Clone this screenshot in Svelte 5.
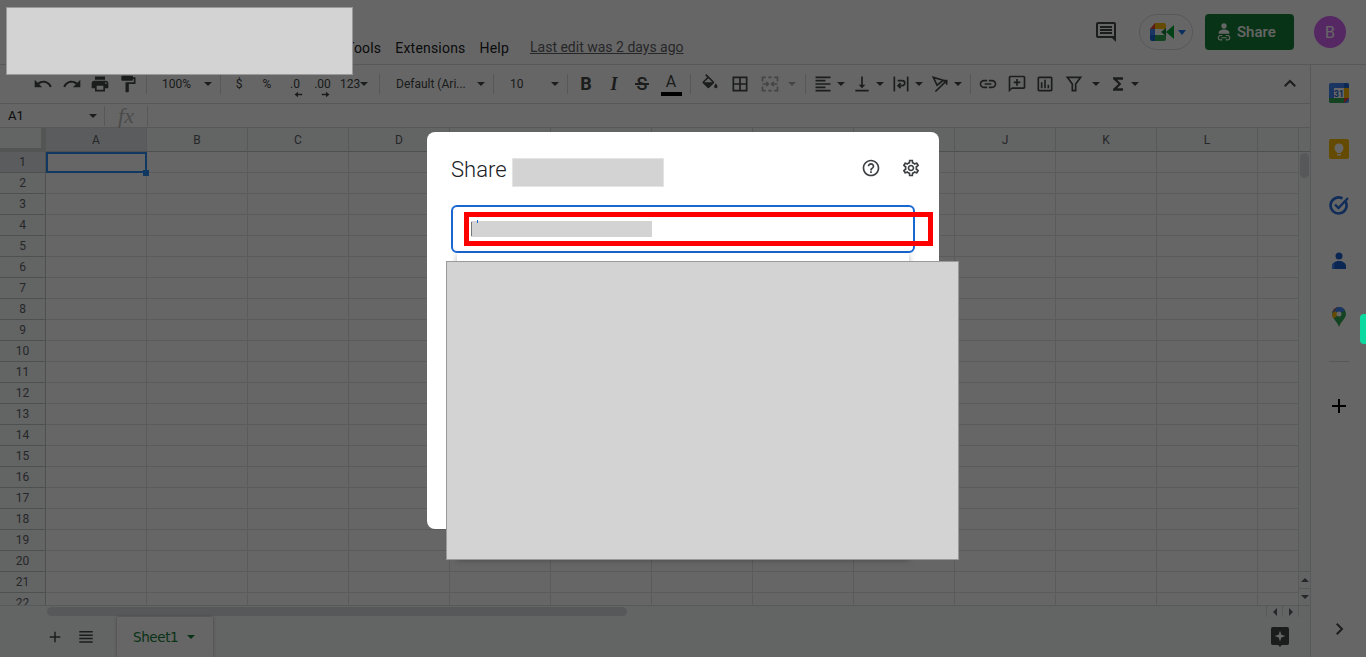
<script>
  const menus = ['File', 'Edit', 'View', 'Insert', 'Format', 'Data', 'Tools', 'Extensions', 'Help']
  const cols = ['', 'A', 'B', 'C', 'D', 'E', 'F', 'G', 'H', 'I', 'J', 'K', 'L', '']
  const rows = Array.from({ length: 22 }, (_, i) => i + 1)

  const tools = [
    { k: 'gap', w: 29 },
    { k: 'icon', w: 28, d: 'M12.5 8c-2.65 0-5.05.99-6.9 2.6L2 7v9h9l-3.62-3.62c1.39-1.16 3.16-1.88 5.12-1.88 3.54 0 6.55 2.31 7.6 5.5l2.37-.78C21.08 11.03 17.15 8 12.5 8z' },
    { k: 'icon', w: 29, d: 'M18.4 10.6C16.55 8.99 14.15 8 11.5 8c-4.65 0-8.58 3.03-9.96 7.22L3.9 16c1.05-3.19 4.05-5.5 7.6-5.5 1.95 0 3.73.72 5.12 1.88L13 16h9V7l-3.6 3.6z' },
    { k: 'icon', w: 28, d: 'M19 8H5c-1.66 0-3 1.34-3 3v6h4v4h12v-4h4v-6c0-1.66-1.34-3-3-3zm-3 11H8v-5h8v5zm3-7c-.55 0-1-.45-1-1s.45-1 1-1 1 .45 1 1-.45 1-1 1zm-1-9H6v4h12V3z' },
    { k: 'icon', w: 28, d: 'M18 4V3c0-.55-.45-1-1-1H5c-.55 0-1 .45-1 1v4c0 .55.45 1 1 1h12c.55 0 1-.45 1-1V6h1v4H9v11c0 .55.45 1 1 1h2c.55 0 1-.45 1-1v-9h8V4h-3z' },
    { k: 'gap', w: 4 },
    { k: 'sep' },
    { k: 'select', w: 73, pl: 15, label: '100%' },
    { k: 'sep' },
    { k: 'gap', w: 4 },
    { k: 'text', w: 28, label: '$' },
    { k: 'text', w: 28, label: '%' },
    { k: 'dec', w: 28, label: '.0', arrow: 'M8 1L3 5l5 4V6h6V4H8z' },
    { k: 'dec', w: 27, label: '.00', arrow: 'M8 1l5 4-5 4V6H2V4h6z' },
    { k: 'select', w: 34, pl: 4, label: '123' },
    { k: 'gap', w: 9 },
    { k: 'sep' },
    { k: 'select', w: 113, pl: 16, label: 'Default (Ari...' },
    { k: 'sep' },
    { k: 'select', w: 73, pl: 16, label: '10' },
    { k: 'sep' },
    { k: 'gap', w: 4 },
    { k: 'fmt', w: 28, label: 'B', cls: 'b' },
    { k: 'fmt', w: 28, label: 'I', cls: 'i' },
    { k: 'fmt', w: 28, label: 'S', cls: 's' },
    { k: 'fmt', w: 30, label: 'A', cls: 'a' },
    { k: 'gap', w: 4 },
    { k: 'sep' },
    { k: 'gap', w: 4 },
    { k: 'icon', w: 30, d: 'M16.56 8.94L7.62 0 6.21 1.41l2.38 2.38-5.15 5.15c-.59.59-.59 1.54 0 2.12l5.5 5.5c.29.29.68.44 1.06.44s.77-.15 1.06-.44l5.5-5.5c.59-.58.59-1.53 0-2.12zM5.21 10L10 5.21 14.79 10H5.21zM19 11.5s-2 2.17-2 3.5c0 1.1.9 2 2 2s2-.9 2-2c0-1.33-2-3.5-2-3.5z' },
    { k: 'icon', w: 30, d: 'M3 3v18h18V3H3zm8 16H5v-6h6v6zm0-8H5V5h6v6zm8 8h-6v-6h6v6zm0-8h-6V5h6v6z' },
    { k: 'icon', w: 30, dim: true, s: 'M3 9V4h4M10 4h4M17 4h4v5M3 15v5h4M10 20h4M17 20h4v-5M3 12h7M7.500 9.500L10 12l-2.500 2.500M21 12h-7M16.500 9.500L14 12l2.500 2.500' },
    { k: 'caret', w: 14, dim: true },
    { k: 'gap', w: 6 },
    { k: 'sep' },
    { k: 'gap', w: 4 },
    { k: 'icon', w: 26, d: 'M15 15H3v2h12v-2zm0-8H3v2h12V7zM3 13h18v-2H3v2zm0 8h18v-2H3v2zM3 3v2h18V3H3z' },
    { k: 'caret', w: 9 },
    { k: 'gap', w: 4 },
    { k: 'icon', w: 26, d: 'M16 13h-3V3h-2v10H8l4 4 4-4zM4 19v2h16v-2H4z' },
    { k: 'caret', w: 9 },
    { k: 'gap', w: 4 },
    { k: 'icon', w: 26, d: 'M3 3h2v18H3zM19 3h2v18h-2z', s: 'M8 8h5.500a3 3 0 0 1 0 6H9M11.500 11L8.500 14l3 3' },
    { k: 'caret', w: 9 },
    { k: 'gap', w: 4 },
    { k: 'icon', w: 26, s: 'M4 4l12 3.500-7.500 6zM6.500 21L20 8M15 8h5v5' },
    { k: 'caret', w: 9 },
    { k: 'gap', w: 8 },
    { k: 'sep' },
    { k: 'gap', w: 3 },
    { k: 'icon', w: 28, d: 'M3.900 12c0-1.710 1.390-3.100 3.100-3.100h4V7H7c-2.760 0-5 2.240-5 5s2.240 5 5 5h4v-1.900H7c-1.710 0-3.100-1.390-3.100-3.100zM8 13h8v-2H8v2zm9-6h-4v1.900h4c1.710 0 3.100 1.390 3.100 3.100s-1.390 3.100-3.100 3.100h-4V17h4c2.760 0 5-2.240 5-5s-2.240-5-5-5z' },
    { k: 'icon', w: 29, d: 'M20 2H4c-1.100 0-2 .9-2 2v18l4-4h14c1.100 0 2-.9 2-2V4c0-1.100-.9-2-2-2zm0 14H6l-2 2V4h16v12zM11 6h2v3h3v2h-3v3h-2v-3H8V9h3z' },
    { k: 'icon', w: 28, d: 'M19 3H5c-1.100 0-2 .9-2 2v14c0 1.100.9 2 2 2h14c1.100 0 2-.9 2-2V5c0-1.100-.9-2-2-2zm0 16H5V5h14v14zM7 10h2v7H7zm4-3h2v10h-2zm4 6h2v4h-2z' },
    { k: 'icon', w: 30, s: 'M4 4h16l-6 8v8h-4v-8z' },
    { k: 'caret', w: 13 },
    { k: 'gap', w: 2 },
    { k: 'icon', w: 27, d: 'M18 4H6v2l6.500 6L6 18v2h12v-3h-7l5-5-5-5h7z' },
    { k: 'caret', w: 8 }
  ]
</script>

<div class="app">
  <header class="top">
    <nav class="menu">
      {#each menus as m}
        <span>{m}</span>
      {/each}
    </nav>
    <span class="last-edit">Last edit was 2 days ago</span>
    <div class="top-right">
      <svg class="ic24 comment" viewBox="0 0 24 24"><path d="M21.990 4c0-1.100-.89-2-1.990-2H4c-1.100 0-2 .9-2 2v12c0 1.100.9 2 2 2h14l4 4-.01-18zM20 16H4V4h16v12zM6 12h12v2H6zm0-3h12v2H6zm0-3h12v2H6z" /></svg>
      <div class="meet">
        <svg width="24" height="18" viewBox="0 0 24 18">
          <path d="M5 0h9a2 2 0 0 1 2 2v4H5z" fill="#fbbc04" />
          <path d="M5 0v6H0z" fill="#ea4335" />
          <path d="M0 6h5v6H0z" fill="#4285f4" />
          <path d="M0 12h5v6H2a2 2 0 0 1-2-2z" fill="#1967d2" />
          <path d="M5 12h11v4a2 2 0 0 1-2 2H5z" fill="#34a853" />
          <path d="M11 9l5-4v8z" fill="#188038" />
          <path d="M16 9l8-7v14z" fill="#00a63e" />
        </svg>
        <i class="meet-caret"></i>
      </div>
      <button class="share">
        <svg width="14" height="20" viewBox="0 0 16 22">
          <circle cx="8" cy="4" r="3" fill="#fff" />
          <path d="M2 13v-2c0-1.500 3-3 6-3s6 1.500 6 3v2z" fill="#fff" />
          <path d="M6 15H4a2.500 2.500 0 0 0 0 5h2M10 15h2a2.500 2.500 0 0 1 0 5h-2M5 17.500h6" fill="none" stroke="#fff" stroke-width="1.200" />
        </svg>
        Share
      </button>
      <div class="avatar">B</div>
    </div>
  </header>

  <div class="body">
    <main class="main">
      <div class="toolbar">
        {#each tools as t}
          {#if t.k === 'gap'}
            <span style:width="{t.w}px"></span>
          {:else if t.k === 'sep'}
            <span class="sep"></span>
          {:else if t.k === 'icon'}
            <span class="tool" class:dim={t.dim} style:width="{t.w}px">
              <svg class="ic20" viewBox="0 0 24 24">
                {#if t.d}<path d={t.d} />{/if}
                {#if t.s}<path class="stroke" d={t.s} />{/if}
              </svg>
            </span>
          {:else if t.k === 'caret'}
            <span class="tool" class:dim={t.dim} style:width="{t.w}px"><i class="caret"></i></span>
          {:else if t.k === 'select'}
            <span class="tool select" style:width="{t.w}px" style:padding-left="{t.pl}px">
              <span>{t.label}</span><i class="caret"></i>
            </span>
          {:else if t.k === 'text'}
            <span class="tool label" style:width="{t.w}px">{t.label}</span>
          {:else if t.k === 'dec'}
            <span class="tool dec" style:width="{t.w}px">
              <span>{t.label}</span>
              <svg class="dec-arrow" viewBox="0 0 16 10"><path d={t.arrow} /></svg>
            </span>
          {:else if t.k === 'fmt'}
            <span class="tool fmt {t.cls}" style:width="{t.w}px">{t.label}</span>
          {/if}
        {/each}
        <span class="collapse">
          <svg class="ic18" viewBox="0 0 24 24"><path class="stroke thick" d="M5 15l7-7 7 7" /></svg>
        </span>
      </div>

      <div class="formula">
        <span class="cell-name">A1</span>
        <i class="caret"></i>
        <span class="sep"></span>
        <span class="fx">fx</span>
        <span class="sep"></span>
      </div>

      <div class="sheet">
        <div class="grid">
          {#each cols as c, i}
            <div class="head" class:corner={i === 0} class:active={c === 'A'}>{c}</div>
          {/each}
          {#each rows as r}
            {#each cols as c, i}
              {#if i === 0}
                <div class="rownum" class:active={r === 1}>{r}</div>
              {:else}
                <div class="cell" class:selected={r === 1 && c === 'A'}>
                  {#if r === 1 && c === 'A'}<i class="handle"></i>{/if}
                </div>
              {/if}
            {/each}
          {/each}
        </div>
        <div class="vscroll">
          <div class="vcap"></div>
          <div class="vtrack"><div class="vthumb"></div></div>
          <div class="vbtn"><i class="tri up"></i></div>
          <div class="vbtn"><i class="tri"></i></div>
        </div>
      </div>

      <div class="hscroll">
        <div class="hthumb"></div>
        <div class="hbtn"><i class="tri left"></i></div>
        <div class="hbtn"><i class="tri right"></i></div>
        <div class="hend"></div>
      </div>

      <div class="tabs">
        <svg class="ic18 add" viewBox="0 0 24 24"><path d="M19 13h-6v6h-2v-6H5v-2h6V5h2v6h6v2z" /></svg>
        <svg class="ic18 all" viewBox="0 0 24 24"><path d="M3 4h18v2H3zM3 8.500h18v2H3zM3 13h18v2H3zM3 17.500h18v2H3z" /></svg>
        <div class="tab"><span>Sheet1</span><i class="caret green"></i></div>
        <div class="explore">
          <svg width="18" height="20" viewBox="0 0 20 22">
            <path d="M2 0h16a2 2 0 0 1 2 2v16a2 2 0 0 1-2 2h-6l-2 2-2-2H2a2 2 0 0 1-2-2V2a2 2 0 0 1 2-2z" fill="#444746" />
            <path d="M10 4l1.500 4.500L16 10l-4.500 1.500L10 16l-1.500-4.500L4 10l4.500-1.500z" fill="#fff" />
          </svg>
        </div>
      </div>
    </main>

    <aside class="side">
      <svg class="addon" viewBox="0 0 20 20">
        <rect width="20" height="20" rx="2" fill="#4285f4" />
        <path d="M15 0h3a2 2 0 0 1 2 2v3h-5z" fill="#1967d2" />
        <path d="M15 5h5v10h-5z" fill="#fbbc04" />
        <path d="M0 15h15v5H2a2 2 0 0 1-2-2z" fill="#34a853" />
        <path d="M15 15h5l-5 5z" fill="#ea4335" />
        <rect x="5" y="5" width="10" height="10" fill="#fff" />
        <text x="10" y="13.500" class="cal">31</text>
      </svg>
      <svg class="addon" viewBox="0 0 20 20">
        <rect width="20" height="20" rx="2" fill="#fbbc04" />
        <circle cx="10" cy="9" r="4.500" fill="#fff" />
        <rect x="8" y="12" width="4" height="2" fill="#fff" />
        <rect x="8" y="15" width="4" height="1.500" fill="#fff" />
      </svg>
      <svg class="addon" viewBox="0 0 20 20">
        <path d="M16.500 6.500a8 8 0 1 1-3-3" fill="none" stroke="#2a6fdb" stroke-width="2.600" />
        <path d="M6 9.500l3.500 3.500L19 3" fill="none" stroke="#2a6fdb" stroke-width="2.400" />
      </svg>
      <svg class="addon" viewBox="0 0 20 20">
        <circle cx="10" cy="5" r="3.500" fill="#1a5fd0" />
        <path d="M3 18v-3c0-3 3.500-5 7-5s7 2 7 5v3z" fill="#1a5fd0" />
        <path d="M3 18v-3c0-1.500 1-3 2.500-3.800V18z" fill="#4285f4" />
      </svg>
      <svg class="addon" viewBox="0 0 20 20">
        <path d="M10 0a7 7 0 0 1 7 7c0 4.500-5 7-7 13-2-6-7-8.500-7-13a7 7 0 0 1 7-7z" fill="#34a853" />
        <path d="M3.500 4.500A7 7 0 0 1 8 .3l2 3.200-3.500 4.500z" fill="#ea4335" />
        <path d="M8 .3A7 7 0 0 1 16 3.500L6.500 8 4 4.500z" fill="#4285f4" />
        <path d="M3 7c0 1.500.5 3 2 4.500L10 7 6 4z" fill="#fbbc04" />
        <circle cx="10" cy="7" r="2.500" fill="#fff" />
      </svg>
      <div class="divider"></div>
      <svg class="ic24 plus" viewBox="0 0 24 24"><path d="M19 13h-6v6h-2v-6H5v-2h6V5h2v6h6v2z" /></svg>
      <svg class="ic18 chevron" viewBox="0 0 24 24"><path class="stroke thick" d="M9 5l7 7-7 7" /></svg>
    </aside>
  </div>

  <div class="scrim">
    <div class="dialog">
      <div class="dialog-head">
        <h2>Share</h2>
        <div class="redact title-mask"></div>
        <span class="dialog-icons">
          <svg class="ic20" viewBox="0 0 24 24"><path d="M11 18h2v-2h-2v2zm1-16C6.480 2 2 6.480 2 12s4.480 10 10 10 10-4.480 10-10S17.520 2 12 2zm0 18c-4.410 0-8-3.590-8-8s3.590-8 8-8 8 3.590 8 8-3.590 8-8 8zm0-14c-2.210 0-4 1.790-4 4h2c0-1.100.9-2 2-2s2 .9 2 2c0 2-3 1.750-3 5h2c0-2.250 3-2.500 3-5 0-2.210-1.790-4-4-4z" /></svg>
          <svg class="ic20" viewBox="0 0 24 24"><path d="M19.430 12.980c.04-.32.07-.64.07-.98s-.03-.66-.07-.98l2.110-1.650c.19-.15.24-.42.12-.64l-2-3.460c-.12-.22-.39-.3-.61-.22l-2.490 1c-.52-.4-1.080-.73-1.690-.98l-.38-2.650C14.460 2.180 14.250 2 14 2h-4c-.25 0-.46.18-.49.42l-.38 2.650c-.61.25-1.170.59-1.690.98l-2.490-1c-.23-.09-.49 0-.61.22l-2 3.460c-.13.22-.07.49.12.64l2.110 1.650c-.04.32-.07.65-.07.98s.03.66.07.98l-2.110 1.650c-.19.15-.24.42-.12.64l2 3.460c.12.22.39.3.61.22l2.490-1c.52.4 1.080.73 1.690.98l.38 2.650c.03.24.24.42.49.42h4c.25 0 .46-.18.49-.42l.38-2.650c.61-.25 1.170-.59 1.690-.98l2.490 1c.23.09.49 0 .61-.22l2-3.460c.12-.22.07-.49-.12-.64l-2.110-1.650zm-1.980-1.710c.04.31.05.52.05.73 0 .21-.02.43-.05.73l-.14 1.130.89.7 1.080.84-.7 1.210-1.270-.51-1.040-.42-.9.68c-.43.32-.84.56-1.250.73l-1.060.43-.16 1.130-.2 1.350h-1.400l-.19-1.350-.16-1.130-1.060-.43c-.43-.18-.83-.41-1.230-.71l-.91-.7-1.060.43-1.270.51-.7-1.210 1.080-.84.89-.7-.14-1.130c-.03-.31-.05-.54-.05-.74s.02-.43.05-.73l.14-1.130-.89-.7-1.080-.84.7-1.210 1.270.51 1.040.42.9-.68c.43-.32.84-.56 1.250-.73l1.060-.43.16-1.130.2-1.350h1.390l.19 1.350.16 1.130 1.060.43c.43.18.83.41 1.230.71l.91.7 1.060-.43 1.270-.51.7 1.210-1.070.85-.89.7.14 1.130zM12 8c-2.210 0-4 1.790-4 4s1.790 4 4 4 4-1.790 4-4-1.790-4-4-4zm0 6c-1.100 0-2-.9-2-2s.9-2 2-2 2 .9 2 2-.9 2-2 2z" /></svg>
        </span>
      </div>
      <div class="people-input">
        <i class="cursor"></i>
        <div class="redact input-mask"></div>
      </div>
      <div class="dropdown"></div>
      <div class="highlight"></div>
      <div class="redact suggest-mask"></div>
    </div>
  </div>

  <div class="redact logo-mask"></div>
  <div class="ext-tab"></div>
</div>

<style>
  :global(body) { margin: 0; background: #fff; font-family: Roboto, "Liberation Sans", sans-serif; }

  .app { position: relative; width: 1366px; height: 657px; overflow: hidden; display: flex; flex-direction: column; color: #202124; }

  .ic18, .ic20, .ic24, .dec-arrow { fill: #444746; display: block; flex: none; }
  .ic18 { width: 18px; height: 18px; }
  .ic20 { width: 20px; height: 20px; }
  .ic24 { width: 24px; height: 24px; }
  .stroke { fill: none; stroke: #444746; stroke-width: 2; }
  .thick { stroke-width: 2.600; }

  .top { height: 65px; box-sizing: border-box; border-bottom: 1px solid #dadce0; display: flex; flex: none; }
  .menu { width: 509px; display: flex; justify-content: flex-end; gap: 14px; align-self: flex-end; padding-bottom: 7px; font-size: 14px; letter-spacing: .2px; line-height: 18px; white-space: nowrap; }
  .last-edit { align-self: flex-end; margin-left: 21px; padding-bottom: 8px; font-size: 14px; line-height: 18px; color: #5f6368; text-decoration: underline; white-space: nowrap; }
  .top-right { margin-left: auto; display: flex; align-items: center; height: 36px; margin-top: 14px; padding-right: 20px; }
  .meet { width: 54px; height: 36px; box-sizing: border-box; margin-left: 21px; border: 1px solid #dadce0; border-radius: 18px; display: flex; align-items: center; padding-left: 10px; gap: 4px; }
  .meet-caret { border: 4px solid transparent; border-top: 5px solid #1a73e8; border-bottom: 0; }
  .share { width: 89px; height: 36px; margin-left: 12px; border: 0; border-radius: 4px; background: #188038; color: #fff; font: 500 15px Roboto, sans-serif; display: flex; align-items: center; justify-content: flex-start; gap: 6px; padding: 0 0 0 12px; }
  .avatar { width: 32px; height: 32px; margin-left: 20px; border-radius: 50%; background: #d864f8; color: #fff; font-size: 16px; display: grid; place-items: center; }

  .body { flex: 1; display: flex; min-height: 0; }
  .main { flex: 1; min-width: 0; display: flex; flex-direction: column; }

  .toolbar { height: 39px; box-sizing: border-box; border-bottom: 1px solid #dadce0; display: flex; align-items: center; flex: none; font-size: 12px; color: #444746; }
  .toolbar > span { flex: none; }
  .sep { width: 1px; height: 20px; background: #dadce0; flex: none; }
  .tool { height: 24px; display: flex; align-items: center; justify-content: center; box-sizing: border-box; }
  .tool.dim { opacity: .45; }
  .select { justify-content: space-between; padding-right: 8px; white-space: nowrap; }
  .label { font-size: 12px; }
  .dec { position: relative; font-size: 12px; padding-bottom: 1px; }
  .dec-arrow { position: absolute; left: 50%; bottom: -2px; width: 12px; height: 7px; margin-left: -3px; }
  .fmt { font-size: 18px; line-height: 18px; color: #444746; position: relative; }
  .fmt.b { font-weight: 700; }
  .fmt.i { font-style: italic; font-weight: 700; font-family: "Liberation Serif", serif; }
  .fmt.s { font-weight: 500; }
  .fmt.s::after { content: ""; position: absolute; left: 7px; right: 7px; top: 11px; height: 2px; background: #444746; }
  .fmt.a { flex-direction: column; font-size: 16px; }
  .fmt.a::after { content: ""; width: 21px; height: 4px; background: #000; margin-top: 1px; }
  .caret { display: block; flex: none; border: 4px solid transparent; border-top: 4px solid #444746; border-bottom: 0; }
  .caret.green { border-top-color: #188038; }
  .collapse { margin-left: auto; width: 40px; display: flex; justify-content: center; }

  .formula { height: 24px; box-sizing: border-box; border-bottom: 1px solid #dadce0; display: flex; align-items: center; flex: none; font-size: 13px; }
  .cell-name { width: 89px; padding-left: 8px; box-sizing: border-box; }
  .formula .sep { margin-left: 7px; }
  .formula .sep:last-child { margin-left: 0; }
  .fx { width: 42px; text-align: center; font: italic 22px "Liberation Serif", serif; color: #bbb; }

  .sheet { height: 477px; flex: none; display: flex; overflow: hidden; }
  .grid { width: 1299px; flex: none; display: grid; grid-template-columns: 46px repeat(12, 101px) 1fr; grid-auto-rows: 21px; grid-template-rows: 24px; overflow: hidden; font-size: 12px; }
  .head { background: #f8f9fa; border-right: 1px solid #dadce0; border-bottom: 1px solid #c4c7c5; display: grid; place-items: center; color: #5f6368; box-sizing: border-box; }
  .head.active { background: #e3e7ea; }
  .corner { border-right: 5px solid #cfd1d3; border-bottom: 4px solid #cfd1d3; }
  .rownum { background: #f8f9fa; border-right: 1px solid #c4c7c5; border-bottom: 1px solid #c4c7c5; display: grid; place-items: center; color: #5f6368; box-sizing: border-box; }
  .rownum.active { background: #e3e7ea; }
  .cell { position: relative; box-sizing: border-box; border-right: 1px solid #e2e3e3; border-bottom: 1px solid #e2e3e3; }
  .cell.selected { border: 2px solid #2a8cf0; z-index: 1; }
  .handle { position: absolute; right: -4px; bottom: -5px; width: 6px; height: 6px; background: #2a8cf0; }

  .vscroll { flex: 1; display: flex; flex-direction: column; background: #f8f9fa; }
  .vcap { height: 24px; box-sizing: border-box; border-bottom: 1px solid #c4c7c5; flex: none; }
  .vtrack { flex: 1; padding: 1px 1px 0; }
  .vthumb { height: 25px; width: 9px; border-radius: 5px; background: #dadce0; }
  .vbtn { height: 16px; border-top: 1px solid #dadce0; display: grid; place-items: center; flex: none; }
  .tri { display: block; border: 4px solid transparent; border-top: 4px solid #5f6368; border-bottom: 0; }
  .tri.up { transform: rotate(180deg); }
  .tri.left { transform: rotate(90deg); }
  .tri.right { transform: rotate(-90deg); }

  .hscroll { height: 12px; flex: none; box-sizing: border-box; border-top: 1px solid #dadce0; background: #f8f9fa; display: flex; align-items: center; padding-left: 47px; }
  .hthumb { width: 580px; height: 9px; border-radius: 5px; background: #dadce0; margin-right: auto; }
  .hbtn { width: 16px; height: 11px; box-sizing: border-box; border-left: 1px solid #dadce0; display: grid; place-items: center; }
  .hend { width: 12px; height: 11px; box-sizing: border-box; border-left: 1px solid #dadce0; }

  .tabs { flex: 1; display: flex; align-items: center; background: #f8f9fa; }
  .add { margin-left: 46px; }
  .all { margin-left: 13px; }
  .tab { margin-left: 22px; height: 100%; width: 96px; box-sizing: border-box; background: #fff; box-shadow: 0 0 3px rgba(0,0,0,.3); display: flex; align-items: center; padding-left: 16px; gap: 9px; color: #188038; font-family: "DejaVu Sans", sans-serif; }
  .tab span { letter-spacing: -.4px; font-size: 13.500px; }
  .explore { margin-left: auto; margin-right: 21px; line-height: 0; }

  .side { width: 55px; flex: none; border-left: 1px solid #dadce0; display: flex; flex-direction: column; align-items: center; padding-top: 18px; gap: 36px; }
  .addon { width: 20px; height: 20px; display: block; flex: none; }
  .cal { font: 700 8.500px Roboto, sans-serif; fill: #1967d2; text-anchor: middle; }
  .divider { width: 20px; height: 1px; background: #dadce0; margin-top: -2px; }
  .plus { margin-top: -4px; fill: #000; }
  .chevron { margin-top: auto; margin-bottom: 19px; }

  .scrim { position: absolute; inset: 0; z-index: 2; background: rgba(0,0,0,.6); display: flex; align-items: center; justify-content: center; padding-top: 4px; box-sizing: border-box; }
  .dialog { position: relative; width: 512px; height: 397px; box-sizing: border-box; background: #fff; border-radius: 8px; padding: 22px 24px 0; }
  .dialog-head { display: flex; height: 28px; margin-bottom: 23px; align-items: center; }
  h2 { margin: 4px 0 0; font-size: 22px; font-weight: 300; color: #202124; line-height: 28px; }
  .redact { background: #d3d3d3; box-sizing: border-box; }
  .title-mask { width: 152px; height: 29px; margin: 8px 0 0 5px; border: 1px solid #e4e4e4; }
  .dialog-icons { margin-left: auto; margin-right: -6px; display: flex; gap: 20px; }
  .dialog-icons .ic20 { fill: #3c4043; }
  .people-input { position: relative; height: 48px; box-sizing: border-box; border: 2px solid #1967d2; border-radius: 6px; padding: 14px 0 0 18px; }
  .input-mask { width: 181px; height: 16px; }
  .cursor { position: absolute; left: 18px; top: 15px; width: 1px; height: 14px; background: #777; }
  .cursor::after { content: ""; position: absolute; left: 6px; top: -2px; width: 1px; height: 3px; background: #1967d2; }
  .dropdown { position: absolute; left: 30px; top: 121px; width: 452px; height: 305px; background: #fff; box-shadow: 0 2px 6px rgba(0,0,0,.3); }
  .highlight { position: absolute; left: 37px; top: 80px; width: 469px; height: 34px; box-sizing: border-box; border: 5px solid #f00; }
  .suggest-mask { position: absolute; left: 19px; top: 129px; width: 513px; height: 299px; border: 1px solid #999; }

  .logo-mask { position: absolute; z-index: 3; left: 6px; top: 7px; width: 347px; height: 68px; border: 1px solid #999; }
  .ext-tab { position: absolute; z-index: 3; left: 1360px; top: 314px; width: 6px; height: 30px; border-radius: 4px 0 0 4px; background: #0cd9a0; }
</style>
